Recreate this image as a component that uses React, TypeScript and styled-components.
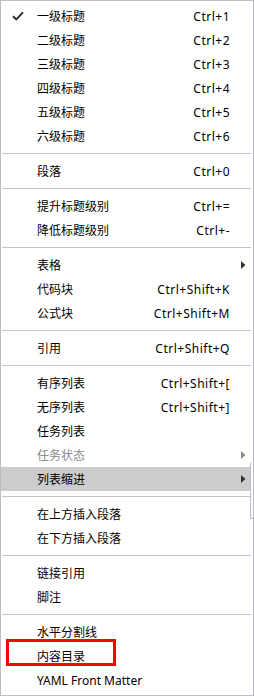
import React from 'react'
import styled, { createGlobalStyle } from 'styled-components'

type Entry =
  | { kind: 'sep' }
  | {
      kind: 'item'
      label: string
      shortcut?: string
      checked?: boolean
      submenu?: boolean
      disabled?: boolean
      active?: boolean
    }

const entries: Entry[] = [
  { kind: 'item', label: '一级标题', shortcut: 'Ctrl+1', checked: true },
  { kind: 'item', label: '二级标题', shortcut: 'Ctrl+2' },
  { kind: 'item', label: '三级标题', shortcut: 'Ctrl+3' },
  { kind: 'item', label: '四级标题', shortcut: 'Ctrl+4' },
  { kind: 'item', label: '五级标题', shortcut: 'Ctrl+5' },
  { kind: 'item', label: '六级标题', shortcut: 'Ctrl+6' },
  { kind: 'sep' },
  { kind: 'item', label: '段落', shortcut: 'Ctrl+0' },
  { kind: 'sep' },
  { kind: 'item', label: '提升标题级别', shortcut: 'Ctrl+=' },
  { kind: 'item', label: '降低标题级别', shortcut: 'Ctrl+-' },
  { kind: 'sep' },
  { kind: 'item', label: '表格', submenu: true },
  { kind: 'item', label: '代码块', shortcut: 'Ctrl+Shift+K' },
  { kind: 'item', label: '公式块', shortcut: 'Ctrl+Shift+M' },
  { kind: 'sep' },
  { kind: 'item', label: '引用', shortcut: 'Ctrl+Shift+Q' },
  { kind: 'sep' },
  { kind: 'item', label: '有序列表', shortcut: 'Ctrl+Shift+[' },
  { kind: 'item', label: '无序列表', shortcut: 'Ctrl+Shift+]' },
  { kind: 'item', label: '任务列表' },
  { kind: 'item', label: '任务状态', submenu: true, disabled: true },
  { kind: 'item', label: '列表缩进', submenu: true, active: true },
  { kind: 'sep' },
  { kind: 'item', label: '在上方插入段落' },
  { kind: 'item', label: '在下方插入段落' },
  { kind: 'sep' },
  { kind: 'item', label: '链接引用' },
  { kind: 'item', label: '脚注' },
  { kind: 'sep' },
  { kind: 'item', label: '水平分割线' },
  { kind: 'item', label: '内容目录' },
  { kind: 'item', label: 'YAML Front Matter' },
]

const App: React.FC = () => {
  return (
    <>
      <GlobalStyle />
      <StyledMenu>
        {entries.map((entry, i) =>
          entry.kind === 'sep' ? (
            <StyledSeparator key={i} />
          ) : (
            <StyledItem key={i} $active={entry.active} $disabled={entry.disabled}>
              <StyledCheckCell>
                {entry.checked && (
                  <svg width="12" height="10" viewBox="0 0 12 10">
                    <path
                      d="M1 5.2 L4.3 8.4 L11 1.4"
                      fill="none"
                      stroke="#2b2b2b"
                      strokeWidth="2"
                    />
                  </svg>
                )}
              </StyledCheckCell>
              <StyledLabel>{entry.label}</StyledLabel>
              <StyledShortcut>{entry.shortcut}</StyledShortcut>
              <StyledArrowCell>
                {entry.submenu && (
                  <svg width="5" height="8" viewBox="0 0 5 8">
                    <path d="M0 0 L4.5 4 L0 8 Z" fill={entry.disabled ? '#8a8a8a' : '#333'} />
                  </svg>
                )}
              </StyledArrowCell>
            </StyledItem>
          )
        )}
        <StyledSubmenuEdge />
        <StyledHighlightBox />
      </StyledMenu>
    </>
  )
}

const GlobalStyle = createGlobalStyle`
  body {
    margin: 0;
    background: #fff;
    font-family: "Noto Sans", "Noto Sans CJK SC", sans-serif;
  }
`

const StyledMenu = styled.div`
  position: relative;
  box-sizing: border-box;
  width: 254px;
  height: 696px;
  padding: 3px 0;
  background: #fff;
  border: 1px solid #bdbdc4;
  overflow: hidden;
`

const StyledItem = styled.div<{ $active?: boolean; $disabled?: boolean }>`
  display: grid;
  grid-template-columns: 36px 1fr auto 23px;
  align-items: center;
  height: 24px;
  font-size: 12px;
  color: ${(p) => (p.$disabled ? '#8a8a8a' : '#000')};
  background: ${(p) => (p.$active ? '#cccccc' : 'transparent')};
`

const StyledCheckCell = styled.div`
  display: flex;
  align-items: center;
  padding-left: 11px;
`

const StyledLabel = styled.span`
  white-space: nowrap;
`

const StyledShortcut = styled.span`
  white-space: nowrap;
  text-align: right;
  letter-spacing: 0.5px;
`

const StyledArrowCell = styled.div`
  display: flex;
  align-items: center;
  padding-left: 11px;
`

const StyledSeparator = styled.div`
  height: 11px;
  display: flex;
  align-items: center;
  padding: 0 2px 0 1px;

  &::after {
    content: '';
    flex: 1;
    height: 1px;
    background: #c3c3c8;
  }
`

const StyledSubmenuEdge = styled.div`
  position: absolute;
  left: 249px;
  top: 462px;
  width: 10px;
  height: 55px;
  background: #fff;
  border-left: 1px solid #bdbdc4;
  border-bottom: 1px solid #bdbdc4;
`

const StyledHighlightBox = styled.div`
  position: absolute;
  left: 5px;
  top: 638px;
  width: 104px;
  height: 21px;
  border: 3px solid #f00;
`

export default App
